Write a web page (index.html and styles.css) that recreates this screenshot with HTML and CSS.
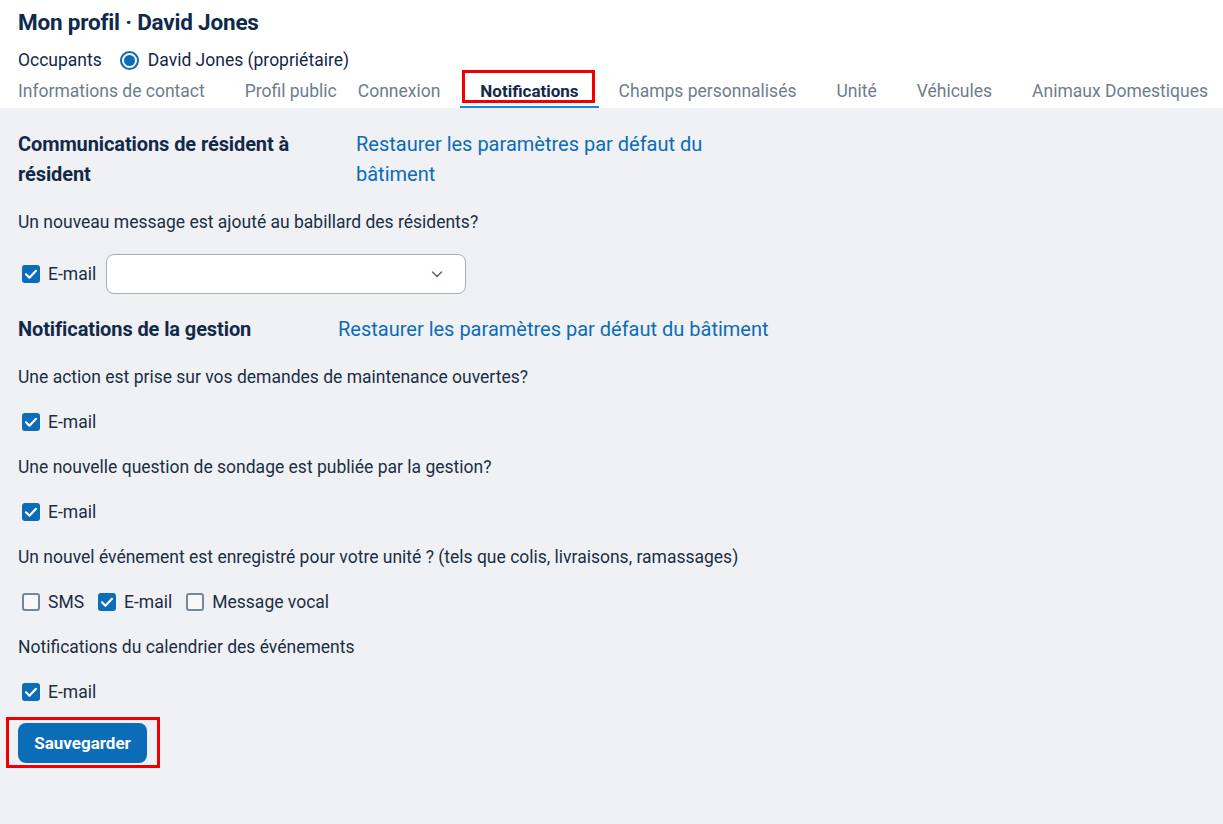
FILE: index.html
```html
<!DOCTYPE html>
<html lang="fr">
<head>
<meta charset="utf-8">
<title>Mon profil · David Jones</title>
<link rel="stylesheet" href="styles.css">
</head>
<body>
<header class="header">
  <h1 class="title">Mon profil · David Jones</h1>
  <div class="occupants">
    <span>Occupants</span>
    <span class="radio"><span class="radio-dot"></span></span>
    <span>David Jones (propriétaire)</span>
  </div>
  <nav class="tabs">
    <a class="tab tab-first">Informations de contact</a>
    <a class="tab tab-tight">Profil public</a>
    <a class="tab tab-tightleft">Connexion</a>
    <a class="tab tab-active">Notifications<span class="mark mark-tab"></span></a>
    <a class="tab">Champs personnalisés</a>
    <a class="tab">Unité</a>
    <a class="tab">Véhicules</a>
    <a class="tab">Animaux Domestiques</a>
  </nav>
</header>

<main class="content">
  <div class="section-head">
    <h2 class="section-title section-title-wide">Communications de résident à résident</h2>
    <a class="restore restore-narrow">Restaurer les paramètres par défaut du bâtiment</a>
  </div>
  <p class="question">Un nouveau message est ajouté au babillard des résidents?</p>
  <div class="options options-select">
    <label class="opt"><span class="cb cb-on"><svg viewBox="0 0 18 18"><polyline points="4,9.3 7.4,12.7 14,5.8"/></svg></span>E-mail</label>
    <div class="select"><svg class="chev" viewBox="0 0 14 14"><polyline points="2.5,5 7,9.5 11.5,5"/></svg></div>
  </div>

  <div class="section-head">
    <h2 class="section-title">Notifications de la gestion</h2>
    <a class="restore">Restaurer les paramètres par défaut du bâtiment</a>
  </div>
  <p class="question">Une action est prise sur vos demandes de maintenance ouvertes?</p>
  <div class="options">
    <label class="opt"><span class="cb cb-on"><svg viewBox="0 0 18 18"><polyline points="4,9.3 7.4,12.7 14,5.8"/></svg></span>E-mail</label>
  </div>
  <p class="question">Une nouvelle question de sondage est publiée par la gestion?</p>
  <div class="options">
    <label class="opt"><span class="cb cb-on"><svg viewBox="0 0 18 18"><polyline points="4,9.3 7.4,12.7 14,5.8"/></svg></span>E-mail</label>
  </div>
  <p class="question">Un nouvel événement est enregistré pour votre unité ? (tels que colis, livraisons, ramassages)</p>
  <div class="options">
    <label class="opt"><span class="cb"></span>SMS</label>
    <label class="opt"><span class="cb cb-on"><svg viewBox="0 0 18 18"><polyline points="4,9.3 7.4,12.7 14,5.8"/></svg></span>E-mail</label>
    <label class="opt"><span class="cb"></span>Message vocal</label>
  </div>
  <p class="question">Notifications du calendrier des événements</p>
  <div class="options">
    <label class="opt"><span class="cb cb-on"><svg viewBox="0 0 18 18"><polyline points="4,9.3 7.4,12.7 14,5.8"/></svg></span>E-mail</label>
  </div>
  <div class="actions">
    <button class="save">Sauvegarder</button>
    <span class="mark mark-btn"></span>
  </div>
</main>
</body>
</html>
```

FILE: styles.css
```css
* { box-sizing: border-box; }
html, body { margin: 0; padding: 0; }
body {
  font-family: Roboto, "Liberation Sans", sans-serif;
  color: #1b2e44;
  background: #f0f1f5;
  width: 1223px;
  height: 824px;
  overflow: hidden;
}
.header {
  background: #ffffff;
  padding: 8px 0 0 18px;
}
.title {
  margin: 0;
  font-size: 22.5px;
  line-height: 28px;
  font-weight: 700;
  color: #0e2a4a;
  letter-spacing: -0.2px;
}
.occupants {
  margin-top: 12px;
  height: 24px;
  display: flex;
  align-items: center;
  font-size: 17.5px;
  color: #13294a;
}
.radio {
  width: 19px;
  height: 19px;
  border: 2px solid #0b6cb8;
  border-radius: 50%;
  margin: 0 9px 0 18px;
  display: flex;
  align-items: center;
  justify-content: center;
}
.radio-dot {
  width: 11px;
  height: 11px;
  border-radius: 50%;
  background: #0b6cb8;
}
.tabs {
  display: flex;
  height: 36px;
}
.tab {
  position: relative;
  display: flex;
  align-items: center;
  padding: 4px 20px 0 20px;
  font-size: 17.5px;
  color: #6e7d8c;
  white-space: nowrap;
  border-bottom: 2px solid transparent;
}
.tab-first { padding-left: 0; }
.tab-tight { padding-right: 10px; }
.tab-tightleft { padding-left: 11px; }
.tab-active {
  font-weight: 700;
  font-size: 17px;
  color: #13294a;
  padding-right: 20px;
  border-bottom-color: #1a88dc;
}
.mark {
  position: absolute;
  border: 3px solid #f00000;
  pointer-events: none;
}
.mark-tab {
  left: 2px;
  top: -2px;
  width: 133px;
  height: 33px;
}
.content {
  padding: 21px 18px 0 18px;
  display: flex;
  flex-direction: column;
  gap: 21px;
}
.section-head {
  display: flex;
  align-items: flex-start;
}
.section-title {
  margin: 0;
  width: 320px;
  font-size: 20px;
  line-height: 30px;
  font-weight: 700;
  color: #13294a;
  letter-spacing: -0.1px;
}
.section-title-wide { width: 338px; padding-right: 20px; }
.restore {
  font-size: 20px;
  line-height: 30px;
  color: #0b6cb8;
}
.restore-narrow { width: 370px; }
.question {
  margin: 0;
  font-size: 17.5px;
  line-height: 24px;
  color: #1b2e44;
}
.options {
  display: flex;
  align-items: center;
  padding-left: 4px;
  gap: 14px;
}
.options-select { margin-top: -1px; margin-bottom: -1px; gap: 13px; }
.opt {
  display: flex;
  align-items: center;
  gap: 8px;
  font-size: 17.5px;
  line-height: 24px;
  color: #1b2e44;
}
.cb {
  width: 18px;
  height: 18px;
  border: 2px solid #74889c;
  border-radius: 3px;
  background: #f7f8fa;
  display: flex;
}
.cb-on {
  border: none;
  background: #0b6cb8;
}
.cb svg {
  width: 18px;
  height: 18px;
  fill: none;
  stroke: #ffffff;
  stroke-width: 2.2;
  stroke-linecap: round;
  stroke-linejoin: round;
}
.select {
  margin-left: -3px;
  width: 360px;
  height: 40px;
  background: #ffffff;
  border: 1px solid #a4adb8;
  border-radius: 8px;
  display: flex;
  align-items: center;
  justify-content: flex-end;
  padding-right: 21px;
}
.chev {
  width: 14px;
  height: 14px;
  fill: none;
  stroke: #5d6b7a;
  stroke-width: 1.6;
  stroke-linecap: round;
  stroke-linejoin: round;
}
.actions {
  position: relative;
  align-self: flex-start;
  margin-top: -2px;
}
.save {
  display: block;
  width: 129px;
  height: 40px;
  border: none;
  border-radius: 8px;
  background: #0b6cb8;
  color: #ffffff;
  font-family: Roboto, "Liberation Sans", sans-serif;
  font-size: 17px;
  font-weight: 700;
  padding: 0;
}
.mark-btn {
  left: -12px;
  top: -6px;
  width: 154px;
  height: 51px;
}
```
